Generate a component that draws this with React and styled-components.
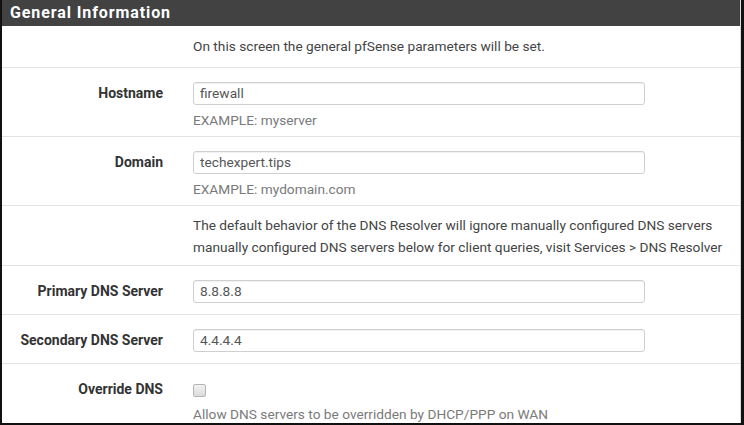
import React from "react"
import styled, { createGlobalStyle } from "styled-components"

const Global = createGlobalStyle`
   html, body {
      margin: 0;
      padding: 0;
      background: #fff;
   }
   body {
      font-family: Roboto, "Liberation Sans", sans-serif;
      font-size: 13.7px;
      color: #3f3f3f;
   }
`

const Frame = styled.div`
   width: 744px;
   height: 425px;
   box-sizing: border-box;
   border-left: 2px solid #111;
   border-right: 3px solid #111;
   border-bottom: 2px solid #111;
   overflow: hidden;
   background: #fff;
`

const Panel = styled.div`
   border-right: 1px solid #dcdcdc;
   height: 100%;
`

const Heading = styled.div`
   height: 26px;
   background: #424242;
   color: #fff;
   font-weight: 700;
   font-size: 16px;
   letter-spacing: 0.9px;
   line-height: 26px;
   padding-left: 8px;
`

const Row = styled.div`
   display: grid;
   grid-template-columns: 161px 1fr;
   column-gap: 30px;
   padding: ${(p) => p.$pad || "14px 0 11px"};
   border-bottom: ${(p) => (p.$last ? "none" : "1px solid #e3e3e3")};
`

const Label = styled.div`
   text-align: right;
   font-weight: 700;
   font-size: 14px;
   color: #333;
   line-height: 23px;
   white-space: nowrap;
`

const Field = styled.div`
   min-width: 0;
`

const Text = styled.div`
   line-height: 22px;
   white-space: nowrap;
   color: #444;
`

const Input = styled.div`
   width: 452px;
   height: 23px;
   box-sizing: border-box;
   border: 1px solid #cfcfcf;
   border-radius: 3px;
   box-shadow: inset 0 1px 1px rgba(0, 0, 0, 0.06);
   padding-left: 6px;
   line-height: 21px;
   color: #555;
`

const Help = styled.div`
   margin-top: ${(p) => p.$gap || 7}px;
   margin-bottom: -4px;
   line-height: 17px;
   color: #7a7a7a;
   white-space: nowrap;
`

const CheckWrap = styled.div`
   height: 23px;
   display: flex;
   align-items: center;
`

const Check = styled.span`
   width: 11px;
   height: 11px;
   border: 1px solid #b4b4b4;
   border-radius: 2px;
   background: linear-gradient(#f2f2f2, #dcdcdc);
   margin-top: 1px;
`

export default function App() {
   return (
      <Frame>
         <Global />
         <Panel>
            <Heading>General Information</Heading>
            <Row $pad="9px 0 10px">
               <div />
               <Text>On this screen the general pfSense parameters will be set.</Text>
            </Row>
            <Row>
               <Label>Hostname</Label>
               <Field>
                  <Input>firewall</Input>
                  <Help>EXAMPLE: myserver</Help>
               </Field>
            </Row>
            <Row>
               <Label>Domain</Label>
               <Field>
                  <Input>techexpert.tips</Input>
                  <Help>EXAMPLE: mydomain.com</Help>
               </Field>
            </Row>
            <Row $pad="8px 0 7px">
               <div />
               <Text>
                  The default behavior of the DNS Resolver will ignore manually configured DNS servers
                  <br />
                  manually configured DNS servers below for client queries, visit Services &gt; DNS Resolver
               </Text>
            </Row>
            <Row>
               <Label>Primary DNS Server</Label>
               <Field>
                  <Input>8.8.8.8</Input>
               </Field>
            </Row>
            <Row>
               <Label>Secondary DNS Server</Label>
               <Field>
                  <Input>4.4.4.4</Input>
               </Field>
            </Row>
            <Row $last>
               <Label>Override DNS</Label>
               <Field>
                  <CheckWrap>
                     <Check />
                  </CheckWrap>
                  <Help $gap={5}>Allow DNS servers to be overridden by DHCP/PPP on WAN</Help>
               </Field>
            </Row>
         </Panel>
      </Frame>
   )
}
